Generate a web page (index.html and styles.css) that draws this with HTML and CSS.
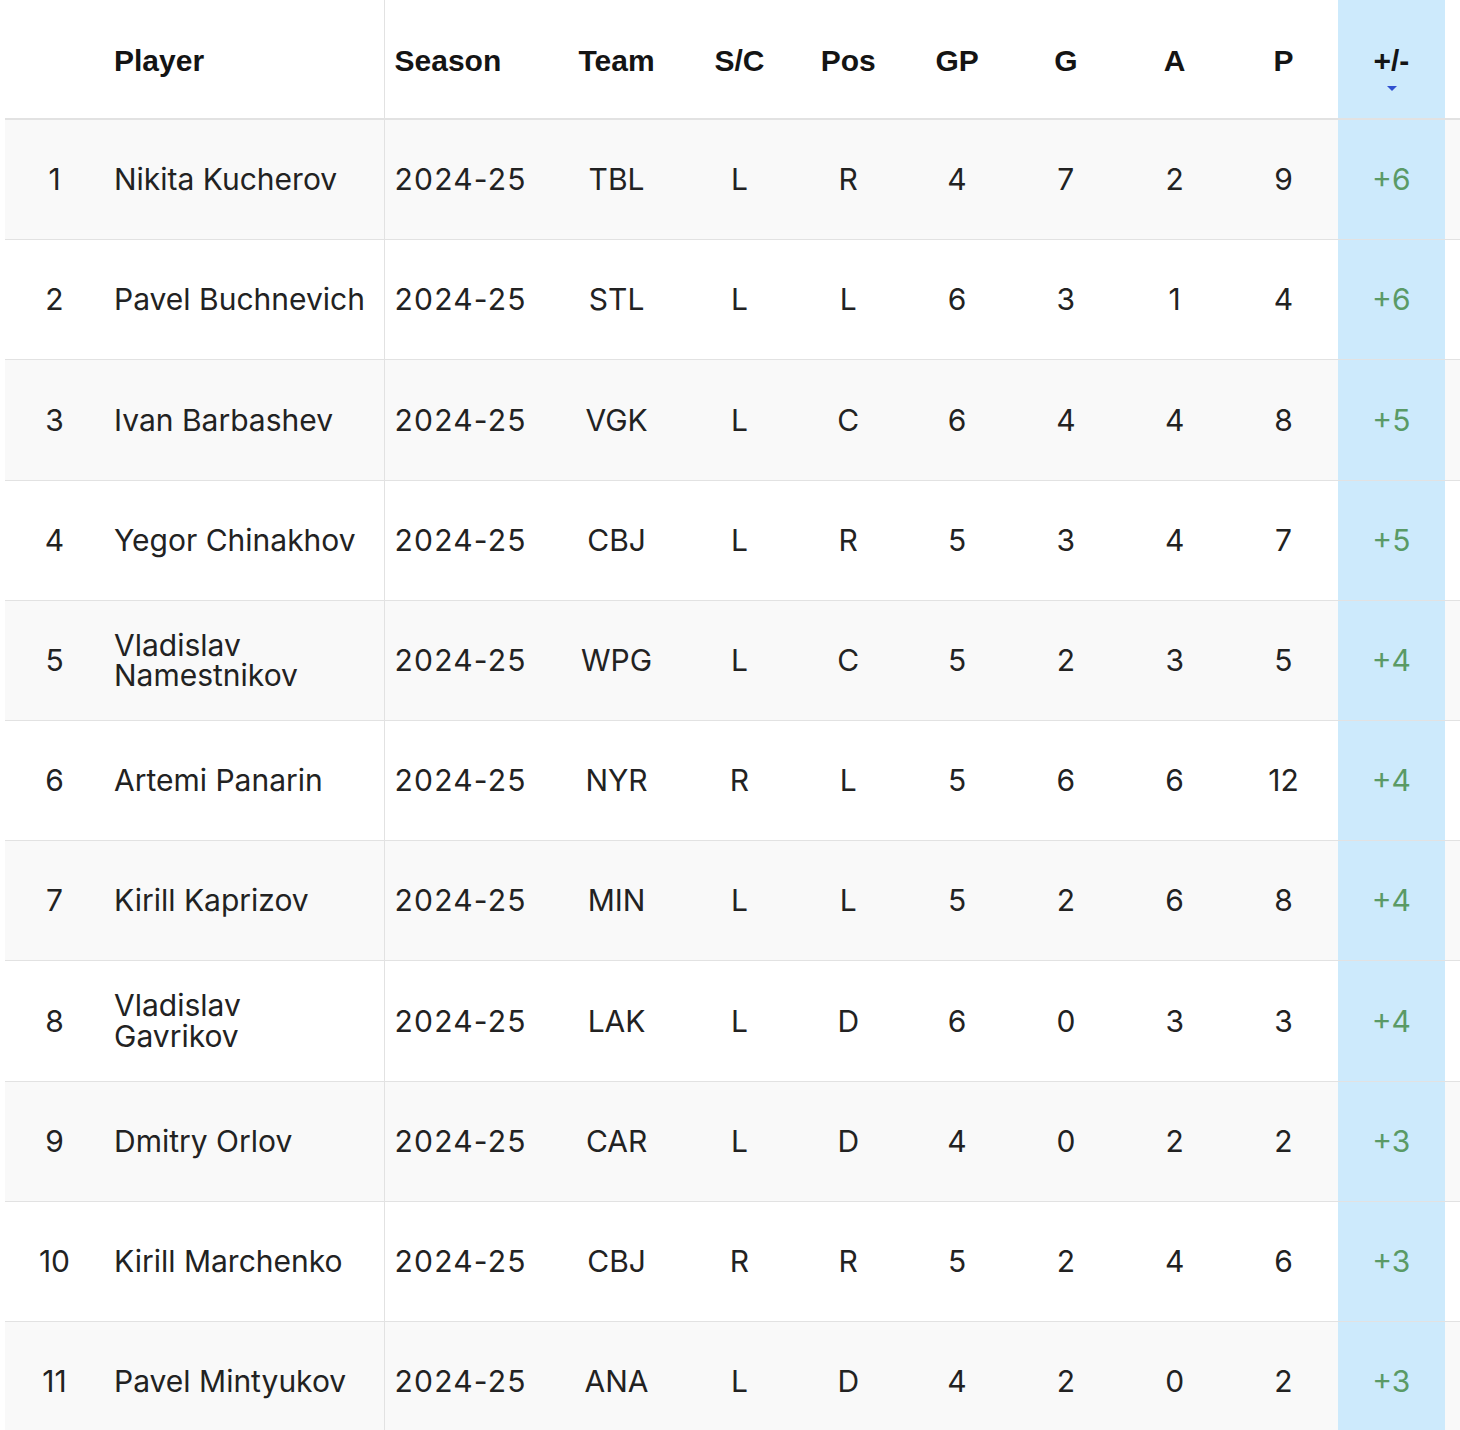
FILE: index.html
```html
<!DOCTYPE html>
<html lang="en">
<head>
<meta charset="utf-8">
<title>Plus/Minus Leaders</title>
<link rel="stylesheet" href="styles.css">
</head>
<body>
<div class="wrap">
<table class="stats">
  <colgroup>
    <col class="c-rank"><col class="c-player"><col class="c-season"><col class="c-team">
    <col class="c-stat"><col class="c-stat"><col class="c-stat"><col class="c-stat">
    <col class="c-stat"><col class="c-stat"><col class="c-pm"><col class="c-extra">
  </colgroup>
  <thead>
    <tr>
      <th class="rank"></th>
      <th class="player">Player</th>
      <th class="season">Season</th>
      <th>Team</th>
      <th>S/C</th>
      <th>Pos</th>
      <th>GP</th>
      <th>G</th>
      <th>A</th>
      <th>P</th>
      <th class="pm sorted">+/-<span class="sort-arrow"></span></th>
      <th class="extra"></th>
    </tr>
  </thead>
  <tbody>
    <tr><td class="rank">1</td><td class="player">Nikita Kucherov</td><td class="season">2024-25</td><td>TBL</td><td>L</td><td>R</td><td>4</td><td>7</td><td>2</td><td>9</td><td class="pm">+6</td><td class="extra"></td></tr>
    <tr><td class="rank">2</td><td class="player">Pavel Buchnevich</td><td class="season">2024-25</td><td>STL</td><td>L</td><td>L</td><td>6</td><td>3</td><td>1</td><td>4</td><td class="pm">+6</td><td class="extra"></td></tr>
    <tr><td class="rank">3</td><td class="player">Ivan Barbashev</td><td class="season">2024-25</td><td>VGK</td><td>L</td><td>C</td><td>6</td><td>4</td><td>4</td><td>8</td><td class="pm">+5</td><td class="extra"></td></tr>
    <tr><td class="rank">4</td><td class="player">Yegor Chinakhov</td><td class="season">2024-25</td><td>CBJ</td><td>L</td><td>R</td><td>5</td><td>3</td><td>4</td><td>7</td><td class="pm">+5</td><td class="extra"></td></tr>
    <tr><td class="rank">5</td><td class="player">Vladislav Namestnikov</td><td class="season">2024-25</td><td>WPG</td><td>L</td><td>C</td><td>5</td><td>2</td><td>3</td><td>5</td><td class="pm">+4</td><td class="extra"></td></tr>
    <tr><td class="rank">6</td><td class="player">Artemi Panarin</td><td class="season">2024-25</td><td>NYR</td><td>R</td><td>L</td><td>5</td><td>6</td><td>6</td><td>12</td><td class="pm">+4</td><td class="extra"></td></tr>
    <tr><td class="rank">7</td><td class="player">Kirill Kaprizov</td><td class="season">2024-25</td><td>MIN</td><td>L</td><td>L</td><td>5</td><td>2</td><td>6</td><td>8</td><td class="pm">+4</td><td class="extra"></td></tr>
    <tr><td class="rank">8</td><td class="player">Vladislav Gavrikov</td><td class="season">2024-25</td><td>LAK</td><td>L</td><td>D</td><td>6</td><td>0</td><td>3</td><td>3</td><td class="pm">+4</td><td class="extra"></td></tr>
    <tr><td class="rank">9</td><td class="player">Dmitry Orlov</td><td class="season">2024-25</td><td>CAR</td><td>L</td><td>D</td><td>4</td><td>0</td><td>2</td><td>2</td><td class="pm">+3</td><td class="extra"></td></tr>
    <tr><td class="rank">10</td><td class="player">Kirill Marchenko</td><td class="season">2024-25</td><td>CBJ</td><td>R</td><td>R</td><td>5</td><td>2</td><td>4</td><td>6</td><td class="pm">+3</td><td class="extra"></td></tr>
    <tr><td class="rank">11</td><td class="player">Pavel Mintyukov</td><td class="season">2024-25</td><td>ANA</td><td>L</td><td>D</td><td>4</td><td>2</td><td>0</td><td>2</td><td class="pm">+3</td><td class="extra"></td></tr>
  </tbody>
</table>
</div>
</body>
</html>
```

FILE: styles.css
```css
html, body {
  margin: 0;
  padding: 0;
  background: #ffffff;
  overflow: hidden;
}

.wrap {
  padding-left: 5px;
  width: 1455px;
  overflow: hidden;
}

.stats {
  border-collapse: collapse;
  table-layout: fixed;
  width: 1555px;
  font-family: Inter, "Noto Sans", sans-serif;
  font-size: 30px;
  color: #222222;
}

.c-rank { width: 99px; }
.c-player { width: 280px; }
.c-season { width: 164px; }
.c-team { width: 137px; }
.c-stat { width: 108.8px; }
.c-pm { width: 107px; }
.c-extra { width: 115px; }

.stats th {
  height: 115px;
  padding: 3px 0 0;
  font-family: "Liberation Sans", Arial, sans-serif;
  font-weight: bold;
  font-size: 30px;
  color: #141414;
  text-align: center;
  vertical-align: middle;
  border-bottom: 2px solid #e2e2e2;
}

.stats td {
  height: 119.2px;
  padding: 0;
  text-align: center;
  vertical-align: middle;
  border-bottom: 1px solid #e2e2e2;
  line-height: 1.02;
}

.stats tbody tr:nth-child(odd) td {
  background: #f9f9f9;
}

.stats th.player,
.stats td.player {
  text-align: left;
  padding-left: 10px;
  padding-right: 14px;
  border-right: 1px solid #e2e2e2;
}

.stats th.season,
.stats td.season {
  text-align: left;
  padding-left: 10px;
}

.stats td.season {
  letter-spacing: 1.2px;
}

.stats th.pm,
.stats td.pm,
.stats tbody tr:nth-child(odd) td.pm {
  background: #cdeafc;
}

.stats td.pm {
  color: #5a9a66;
}

.stats th.sorted {
  position: relative;
}

.sort-arrow {
  position: absolute;
  left: 50%;
  top: 86px;
  margin-left: -4px;
  width: 0;
  height: 0;
  border-left: 5px solid transparent;
  border-right: 5px solid transparent;
  border-top: 5px solid #3050d0;
}
```
